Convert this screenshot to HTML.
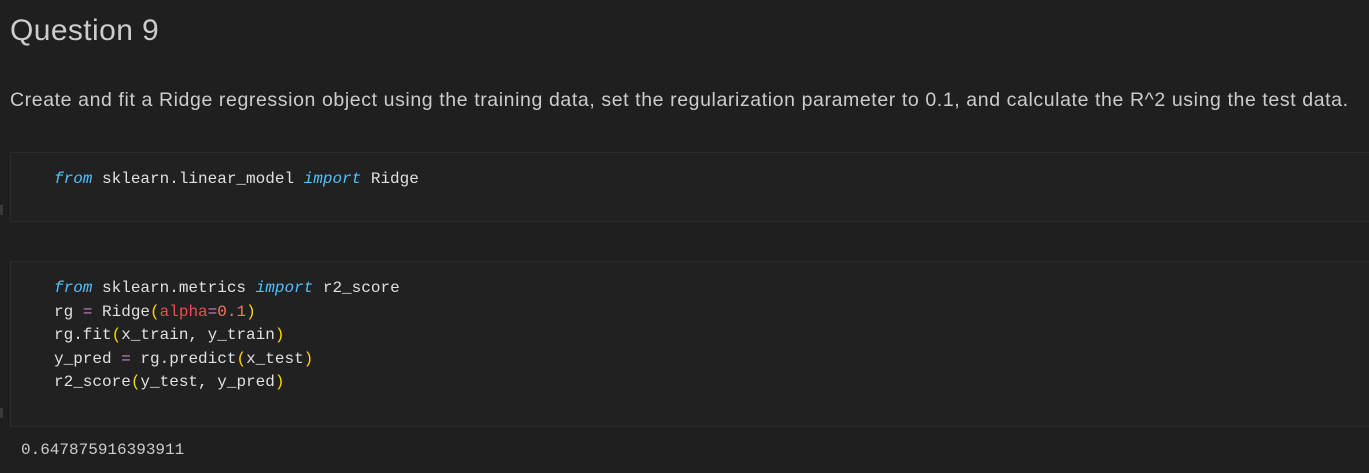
<!DOCTYPE html>
<html><head><meta charset="utf-8"><style>
body{margin:0;background:#1f1f1f;width:1369px;height:473px;overflow:hidden;font-family:"Liberation Sans",sans-serif;color:#cccccc;position:relative}
.h{position:absolute;left:10px;top:14px;font-size:30px;color:#cccccc;white-space:nowrap;letter-spacing:0.4px}
.p{position:absolute;left:10px;top:89px;font-size:19.5px;letter-spacing:0.6px;white-space:nowrap;color:#cccccc}
.cell{position:absolute;left:10px;right:-5px;background:#212121;border:1px solid #2b2b2b}
.code{position:absolute;left:54px;font-family:"Liberation Mono",monospace;font-size:16px;line-height:23.6px;color:#e0e0e0;white-space:pre}
.k{color:#4fc1ff;font-style:italic}
.y{color:#ffd700}.r{color:#f14c4c}.o{color:#f47a5a}.e{color:#c586c0}
.bar{position:absolute;left:0;width:3px;height:10px;background:#3a3a3a}
.out{position:absolute;left:21px;top:441px;font-family:"Liberation Mono",monospace;font-size:16px;color:#cccccc;white-space:pre}
</style></head><body>
<div class="h">Question 9</div>
<div class="p">Create and fit a Ridge regression object using the training data, set the regularization parameter to 0.1, and calculate the R^2 using the test data.</div>
<div class="cell" style="top:152px;height:68px"></div>
<div class="bar" style="top:205px"></div>
<div class="code" style="top:168px"><span class="k">from</span> sklearn.linear_model <span class="k">import</span> Ridge</div>
<div class="cell" style="top:261px;height:164px"></div>
<div class="bar" style="top:408px"></div>
<div class="code" style="top:277px"><span class="k">from</span> sklearn.metrics <span class="k">import</span> r2_score
rg <span class="e">=</span> Ridge<span class="y">(</span><span class="r">alpha</span><span class="e">=</span><span class="o">0.1</span><span class="y">)</span>
rg.fit<span class="y">(</span>x_train, y_train<span class="y">)</span>
y_pred <span class="e">=</span> rg.predict<span class="y">(</span>x_test<span class="y">)</span>
r2_score<span class="y">(</span>y_test, y_pred<span class="y">)</span></div>
<div class="out">0.647875916393911</div>
</body></html>
